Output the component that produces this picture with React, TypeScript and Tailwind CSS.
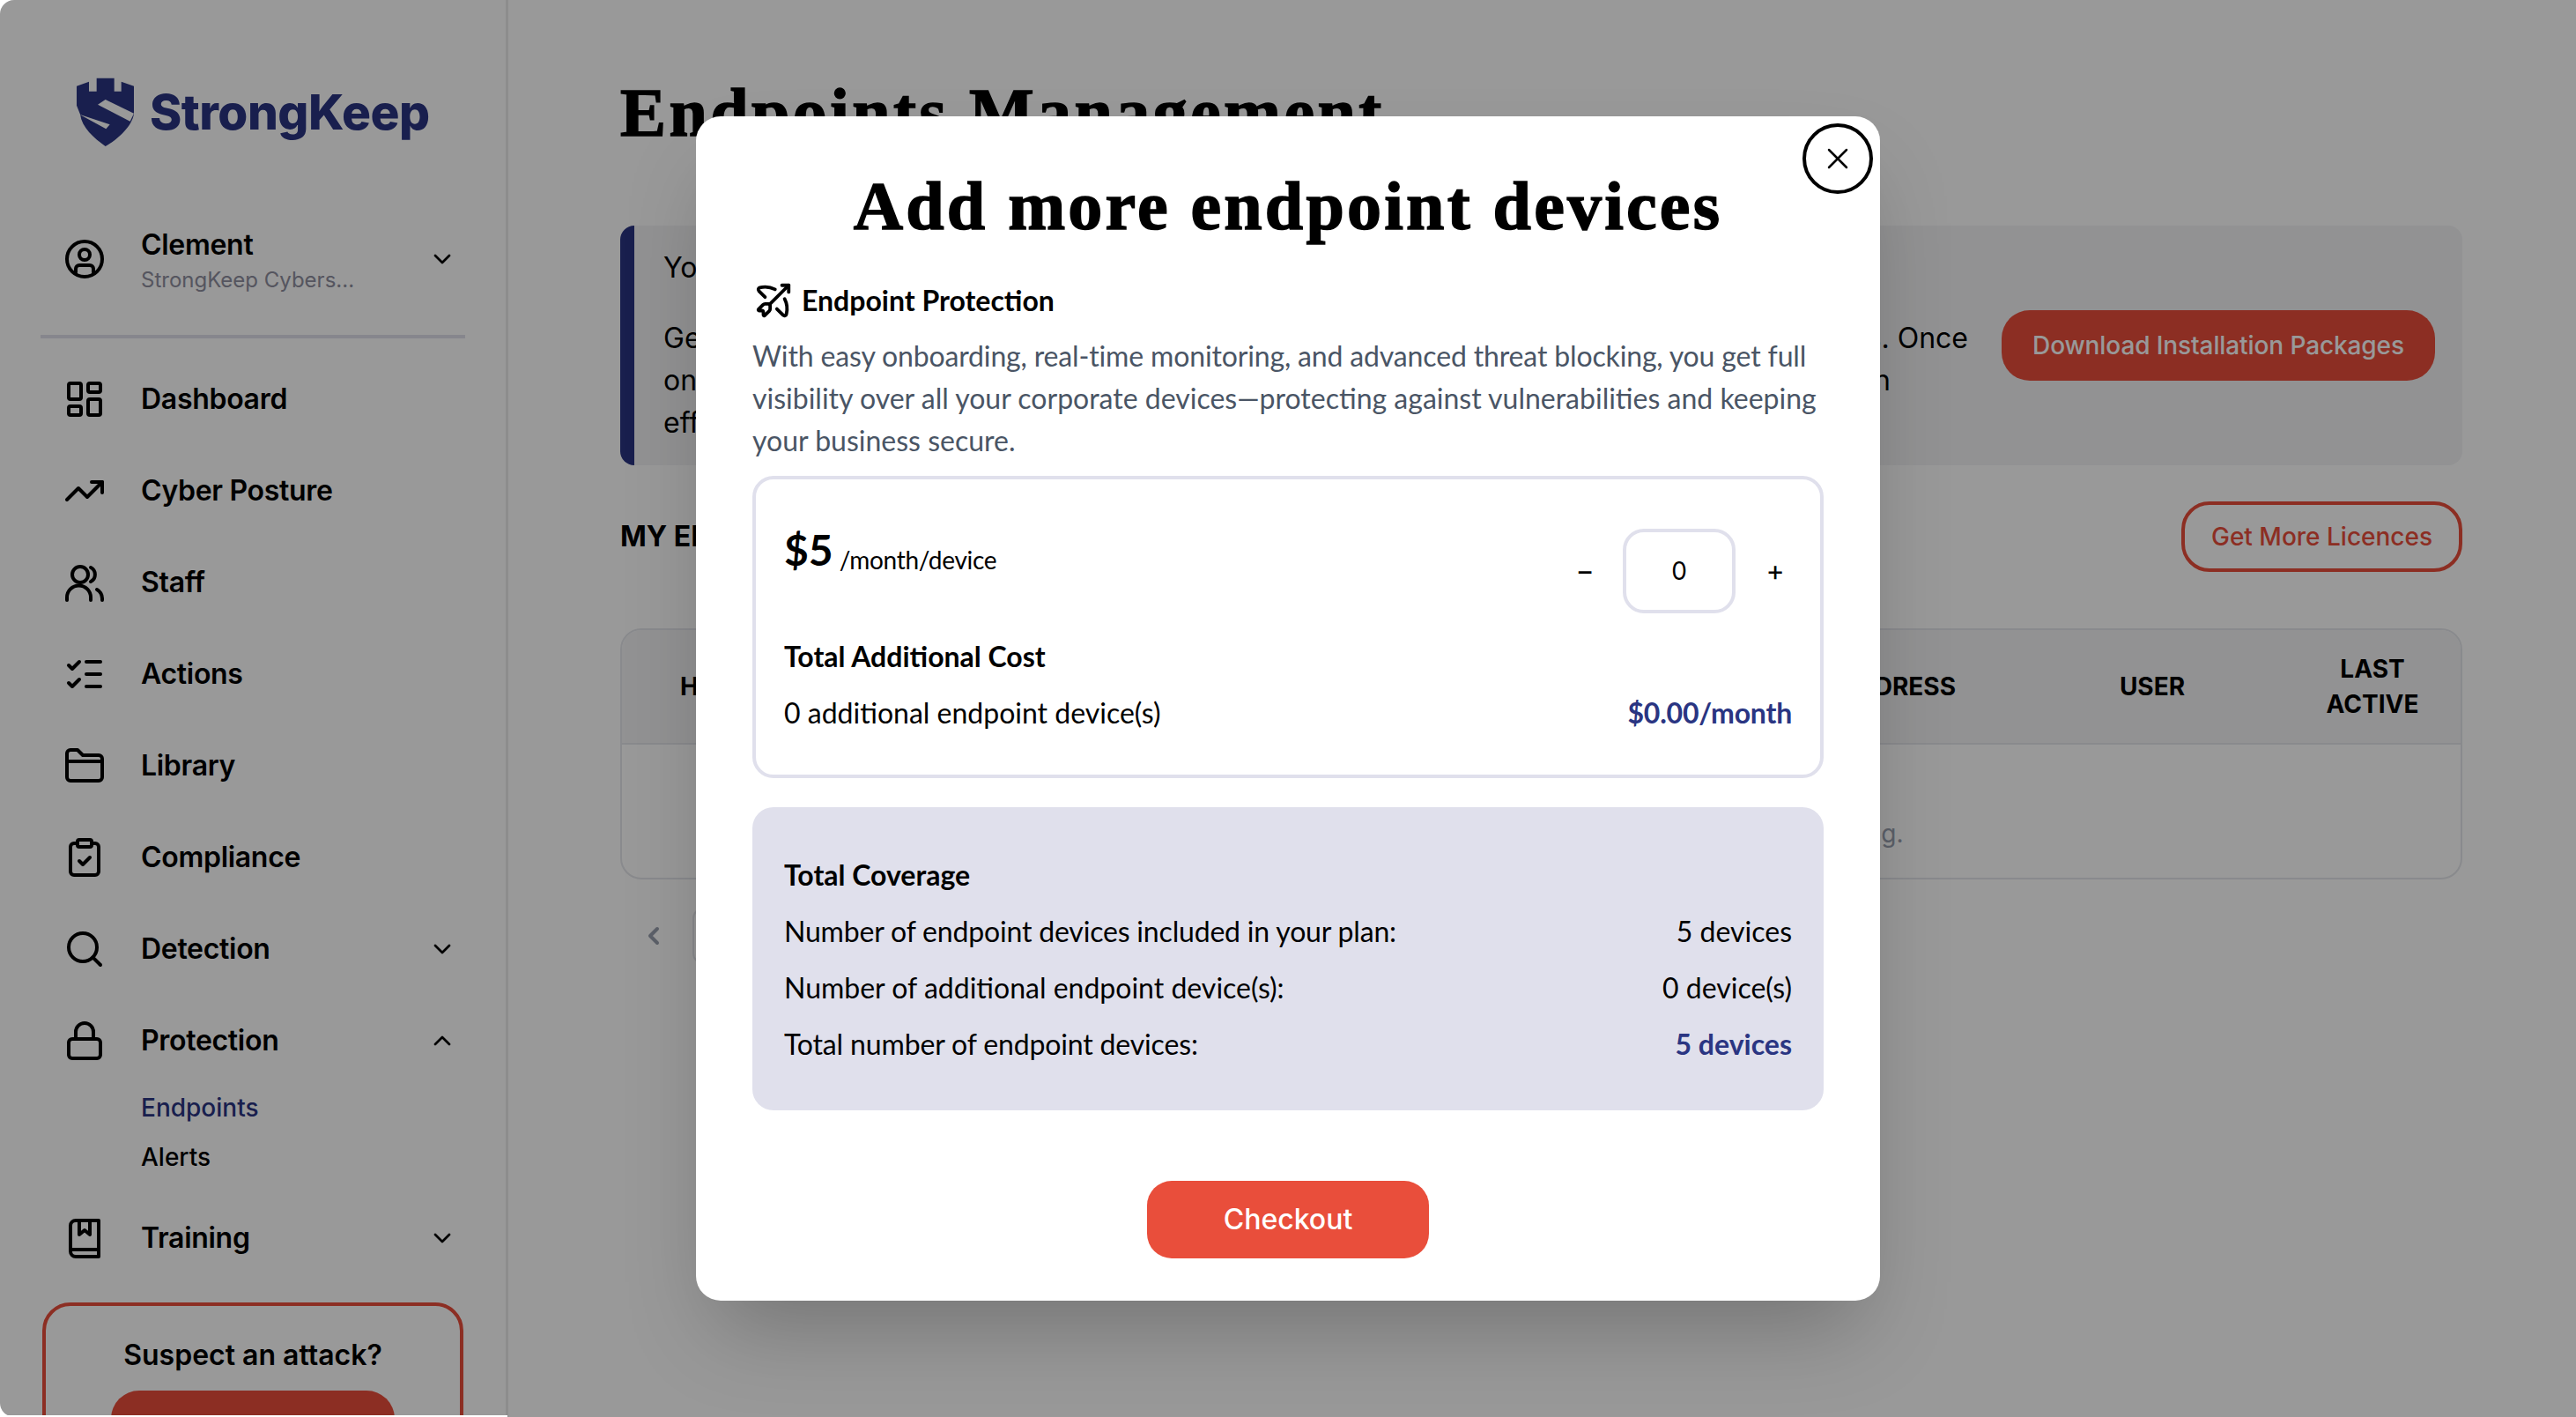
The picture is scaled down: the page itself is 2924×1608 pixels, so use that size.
import { useState, type ReactNode } from 'react';
import {
  BowArrow,
  ChevronDown,
  ChevronLeft,
  ChevronUp,
  ClipboardCheck,
  LayoutDashboard,
  ListChecks,
  Lock,
  Search,
  TrendingUp,
  X,
} from 'lucide-react';

function SvgIcon({ children }: { children: ReactNode }) {
  return (
    <svg
      width="48"
      height="48"
      viewBox="0 0 24 24"
      fill="none"
      stroke="currentColor"
      strokeWidth="2"
      strokeLinecap="round"
      strokeLinejoin="round"
    >
      {children}
    </svg>
  );
}

function UserIcon() {
  return (
    <SvgIcon>
      <circle cx="12" cy="12" r="10" />
      <circle cx="12" cy="9.5" r="3" />
      <path d="M7 19.5v-2a2 2 0 0 1 2-2h6a2 2 0 0 1 2 2v2" />
    </SvgIcon>
  );
}

function StaffIcon() {
  return (
    <SvgIcon>
      <circle cx="9.5" cy="7.5" r="4.5" />
      <path d="M15.5 3.5a4.5 4.5 0 0 1 0 8" />
      <path d="M2 22v-1.5a6.75 6.75 0 0 1 13.5 0V22" />
      <path d="M22 22v-1a6 6 0 0 0-3-5" />
    </SvgIcon>
  );
}

function FolderIcon() {
  return (
    <SvgIcon>
      <path d="M2 5a2 2 0 0 1 2-2h4l3 3h9a2 2 0 0 1 2 2v10.5a2 2 0 0 1-2 2H4a2 2 0 0 1-2-2z" />
      <path d="M2 9.5h20" />
    </SvgIcon>
  );
}

function BookIcon() {
  return (
    <SvgIcon>
      <path d="M4 5a3 3 0 0 1 3-3h13v20.5H7a3 3 0 0 1-3-3z" />
      <path d="M4 18.5h16" />
      <path d="M9 2v8l3-2.5 3 2.5V2" />
    </SvgIcon>
  );
}

function ShieldLogo() {
  return (
    <svg width="65" height="78" viewBox="0 0 195 234" className="shrink-0">
      <path
        d="M0 29 42 14V47H68V2H128V47H152V14L195 29V122C190 165 140 210 98 234C58 205 18 170 12 125L0 95Z"
        fill="#2a3582"
      />
      <path d="M98 75 195 122 182 149 72 92Z" fill="#fff" />
      <path d="M0 122 113 160 100 175 12 127Z" fill="#fff" />
    </svg>
  );
}

const topNav = [
  { label: 'Dashboard', icon: <LayoutDashboard size={48} strokeWidth={2} /> },
  { label: 'Cyber Posture', icon: <TrendingUp size={48} strokeWidth={2} /> },
  { label: 'Staff', icon: <StaffIcon /> },
  { label: 'Actions', icon: <ListChecks size={48} strokeWidth={2} /> },
  { label: 'Library', icon: <FolderIcon /> },
  { label: 'Compliance', icon: <ClipboardCheck size={48} strokeWidth={2} /> },
];

function NavRow({ icon, label, chevron }: { icon: ReactNode; label: string; chevron?: 'up' | 'down' }) {
  return (
    <div className="flex h-[104px] items-center text-[32px] font-semibold tracking-[-0.3px] text-black">
      <span className="flex w-[48px] shrink-0 justify-center">{icon}</span>
      <span className="ml-[40px] flex-1">{label}</span>
      {chevron === 'down' && <ChevronDown size={32} strokeWidth={2} />}
      {chevron === 'up' && <ChevronUp size={32} strokeWidth={2} />}
    </div>
  );
}

function Sidebar() {
  return (
    <aside className="h-[1608px] w-[577px] shrink-0 overflow-hidden border-r-[3px] border-[#ececec] bg-white pl-[72px] pr-[56px] pt-[88px]">
      <div className="ml-[15px] flex h-[78px] items-center">
        <ShieldLogo />
        <span className="ml-[18px] text-[55px] font-extrabold leading-none tracking-[-0.5px] text-[#2a3582]">StrongKeep</span>
      </div>

      <div className="mt-[84px] flex h-[88px] items-center">
        <UserIcon />
        <div className="ml-[40px] mt-[8px] flex-1">
          <div className="text-[32px] font-semibold leading-[40px] tracking-[-0.3px] text-black">Clement</div>
          <div className="text-[24px] leading-[40px] text-[#8e8e9e]">StrongKeep Cybers...</div>
        </div>
        <ChevronDown size={32} strokeWidth={2} />
      </div>

      <div className="-ml-[26px] mr-[-10px] mt-[42px] h-[4px] bg-[#e0e0ec]" />

      <nav className="mt-[17px]">
        {topNav.map((item) => (
          <NavRow key={item.label} icon={item.icon} label={item.label} />
        ))}
        <NavRow icon={<Search size={48} strokeWidth={2} />} label="Detection" chevron="down" />
        <NavRow icon={<Lock size={48} strokeWidth={2} />} label="Protection" chevron="up" />
        <div className="pl-[88px] text-[28px] font-medium">
          <div className="h-[48px] leading-[48px] text-[#2a3582]">Endpoints</div>
          <div className="mt-[8px] h-[48px] leading-[48px] text-black">Alerts</div>
        </div>
        <div className="mt-[16px]">
          <NavRow icon={<BookIcon />} label="Training" chevron="down" />
        </div>
      </nav>

      <div className="-ml-[24px] mt-[21px] h-[200px] w-[478px] rounded-[32px] border-[4px] border-[#e94e3b] px-[74px] pt-[32px]">
        <div className="whitespace-nowrap text-center text-[32px] font-semibold leading-[48px] text-black">Suspect an attack?</div>
        <div className="mt-[16px] h-[88px] rounded-[32px] bg-[#e94e3b]" />
      </div>
    </aside>
  );
}

function BannerLine({ left, right, inset }: { left: string; right: string; inset: string }) {
  return (
    <div className={`flex justify-between whitespace-nowrap ${inset}`}>
      <span>{left}</span>
      <span>{right}</span>
    </div>
  );
}

function MainContent() {
  return (
    <main className="flex-1 pl-[127px] pr-[129px] pt-[80px]">
      <h1 className="h-[96px] whitespace-nowrap font-['Liberation_Serif',serif] text-[78px] font-bold leading-[96px] tracking-[3.4px] text-black [-webkit-text-stroke:1.5px_#000]">
        Endpoints Management
      </h1>

      <section className="mt-[80px] flex h-[272px] items-center rounded-[16px] border-l-[16px] border-[#2a3582] bg-gray-100 pl-[33px] pr-[31px]">
        <div className="w-[1481px] text-[32px] leading-[48px] text-black">
          <p>You have 5 endpoint licences available.</p>
          <div className="mt-[32px]">
            <BannerLine left="Get started by downloading" right="your devices. Once" inset="" />
            <BannerLine left="once installed, devices" right="will appear in" inset="pr-[88px]" />
            <BannerLine left="effortlessly monitored." right="" inset="" />
          </div>
        </div>
        <button className="ml-auto h-[80px] w-[492px] shrink-0 rounded-[32px] bg-[#e94e3b] text-[28px] font-medium tracking-[-0.1px] text-white">
          Download Installation Packages
        </button>
      </section>

      <div className="mt-[41px] flex h-[80px] items-center justify-between">
        <h2 className="text-[32px] font-bold text-black">MY ENDPOINTS</h2>
        <button className="h-[80px] w-[319px] rounded-[32px] border-[4px] border-[#e94e3b] text-[28px] font-medium text-[#e94e3b]">
          Get More Licences
        </button>
      </div>

      <div className="mt-[64px] h-[285px] overflow-hidden rounded-[24px] border-2 border-gray-200">
        <div className="grid h-[130px] grid-cols-[300px_975px_312px_300px_1fr] items-center border-b-2 border-gray-200 bg-gray-100 text-center text-[28px] font-bold uppercase leading-[40px] text-black">
          <span className="pl-[66px] text-left">Hostname</span>
          <span>Status</span>
          <span>IP Address</span>
          <span>User</span>
          <span className="mx-auto w-min">Last Active</span>
        </div>
        <div className="pt-[29px] text-center text-[28px] leading-[48px] text-gray-400">
          <p>No endpoints yet</p>
          <p>Download and install your agents to start endpoint monitoring.</p>
        </div>
      </div>

      <div className="mt-[32px] flex h-[64px] items-center">
        <ChevronLeft size={32} strokeWidth={3} className="ml-[22px] text-gray-400" />
        <div className="ml-[28px] h-[64px] w-[64px] rounded-[12px] border-2 border-gray-200" />
      </div>
    </main>
  );
}

function Stepper() {
  const [count, setCount] = useState(0);
  return (
    <div className="-mr-[1px] flex items-center font-['Inter',sans-serif] text-[32px] text-black">
      <button className="h-[40px] w-[40px] leading-[40px]" onClick={() => setCount(Math.max(0, count - 1))}>−</button>
      <div className="ml-[23px] flex h-[96px] w-[128px] items-center justify-center rounded-[24px] border-[4px] border-[#e0e0ec] text-[28px]">
        {count}
      </div>
      <button className="ml-[25px] h-[40px] w-[40px] leading-[40px]" onClick={() => setCount(count + 1)}>+</button>
    </div>
  );
}

function CoverageRow({ label, value, strong, tracking }: { label: string; value: string; strong?: boolean; tracking: string }) {
  return (
    <div className="mt-[16px] flex h-[48px] items-center justify-between text-[32px] text-black">
      <span className={tracking}>{label}</span>
      <span className={strong ? 'font-bold text-[#2a3582]' : ''}>{value}</span>
    </div>
  );
}

function Modal() {
  return (
    <div className="relative h-[1344px] w-[1344px] rounded-[28px] bg-white px-[64px] pt-[54px] font-['Lato',sans-serif] shadow-[0_50px_100px_-24px_rgba(0,0,0,0.25)]">
      <button className="absolute right-[8px] top-[8px] flex h-[80px] w-[80px] items-center justify-center rounded-full border-[4px] border-black text-black">
        <X size={40} strokeWidth={1.5} />
      </button>

      <h2 className="h-[96px] whitespace-nowrap text-center font-['Liberation_Serif',serif] text-[78px] font-bold leading-[96px] tracking-[3.2px] text-black [-webkit-text-stroke:1.5px_#000]">
        Add more endpoint devices
      </h2>

      <div className="mt-[35px] flex h-[48px] items-center text-[32px] font-bold text-black">
        <BowArrow size={46} strokeWidth={2} className="ml-[1px] shrink-0" />
        <span className="ml-[9px]">Endpoint Protection</span>
      </div>

      <p className="mt-[15px] text-[32px] leading-[48px] text-gray-600">
        <span className="tracking-[-0.15px]">With easy onboarding, real-time monitoring, and advanced threat blocking, you get full</span> visibility over all your corporate devices—protecting against vulnerabilities and keeping your business secure.
      </p>

      <div className="mt-[16px] h-[343px] rounded-[24px] border-[4px] border-[#e0e0ec] px-[32px] pt-[56px]">
        <div className="flex items-start justify-between">
          <div className="-mt-[4px] flex items-end text-black">
            <span className="text-[48px] font-bold leading-[56px]">$5</span>
            <span className="-mb-[3px] ml-[7px] text-[28px] leading-[40px] tracking-[-0.3px]">/month/device</span>
          </div>
          <Stepper />
        </div>
        <div className="mt-[25px] h-[48px] text-[32px] font-bold leading-[48px] text-black">Total Additional Cost</div>
        <div className="mt-[16px] flex h-[48px] items-center justify-between text-[32px] text-black">
          <span>0 additional endpoint device(s)</span>
          <span className="font-bold tracking-[-0.2px] text-[#2a3582]">$0.00/month</span>
        </div>
      </div>

      <div className="mt-[33px] h-[344px] rounded-[24px] bg-[#e0e0ec] px-[36px] pt-[53px]">
        <div className="h-[48px] text-[32px] font-bold leading-[48px] text-black">Total Coverage</div>
        <CoverageRow label="Number of endpoint devices included in your plan:" value="5 devices" tracking="tracking-[-0.18px]" />
        <CoverageRow label="Number of additional endpoint device(s):" value="0 device(s)" tracking="tracking-normal" />
        <CoverageRow label="Total number of endpoint devices:" value="5 devices" strong tracking="tracking-[-0.15px]" />
      </div>

      <div className="mt-[80px] flex justify-center">
        <button className="h-[88px] w-[320px] rounded-[28px] bg-[#e94e3b] font-['Inter',sans-serif] text-[32px] font-medium text-white">
          Checkout
        </button>
      </div>
    </div>
  );
}

export default function App() {
  return (
    <div className="relative h-[1608px] w-[2924px] overflow-hidden bg-white font-['Inter',sans-serif]">
      <div className="flex h-full">
        <Sidebar />
        <MainContent />
      </div>
      <div className="absolute inset-0 flex items-center justify-center rounded-l-[16px] bg-black/40">
        <Modal />
      </div>
      <div className="absolute bottom-0 left-0 h-[2px] w-[576px] bg-white" />
    </div>
  );
}
